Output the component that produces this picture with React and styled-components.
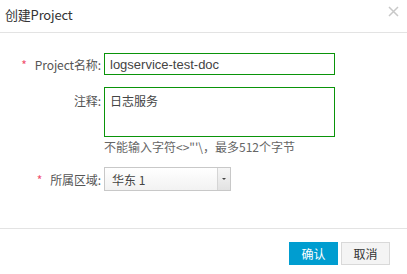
import styled, { createGlobalStyle } from "styled-components"

const Global = createGlobalStyle`
    html, body { margin: 0; padding: 0; background: #fff; }
    body { font-family: "Noto Sans CJK SC", "Liberation Sans", sans-serif; }
    * { box-sizing: border-box; }
`

export default function App() {
    return (
        <Dialog>
            <Global />
            <Header>
                <Title>创建Project</Title>
                <Close>
                    <svg width="11" height="11" viewBox="0 0 11 11">
                        <path d="M1 1L10 10M10 1L1 10" stroke="#c8c8c8" strokeWidth="1.5" />
                    </svg>
                </Close>
            </Header>
            <Body>
                <Row>
                    <Label><Star>*</Star>Project名称:</Label>
                    <Input value="logservice-test-doc" readOnly />
                </Row>
                <Row top>
                    <Label top>注释:</Label>
                    <Field>
                        <TextArea value="日志服务" readOnly />
                        <Hint>不能输入字符&lt;&gt;"'\，最多512个字节</Hint>
                    </Field>
                </Row>
                <Row>
                    <Label><Star>*</Star>所属区域:</Label>
                    <Select>
                        <span>华东 1</span>
                        <Arrow><i /></Arrow>
                    </Select>
                </Row>
            </Body>
            <Footer>
                <Button primary>确认</Button>
                <Button>取消</Button>
            </Footer>
        </Dialog>
    )
}

const Dialog = styled.div`
    width: 407px;
    height: 274px;
    background: #fff;
    display: flex;
    flex-direction: column;
`

const Header = styled.div`
    height: 33px;
    border-bottom: 1px solid #e3e3e3;
    display: flex;
    align-items: center;
    justify-content: space-between;
    padding: 0 8px 3px 5px;
`

const Title = styled.div`
    font-size: 13px;
    color: #333;
    letter-spacing: -0.2px;
`

const Close = styled.div`
    display: flex;
    margin-top: -6px;
`

const Body = styled.div`
    padding-top: 20px;
    height: 195px;
    display: flex;
    flex-direction: column;
    gap: 12px;
`

const Row = styled.div`
    display: flex;
    align-items: ${p => p.top ? "flex-start" : "center"};
`

const Label = styled.div`
    width: 104px;
    padding-right: 3px;
    padding-top: ${p => p.top ? 5 : 0}px;
    text-align: right;
    font-size: 12px;
    color: #555;
    letter-spacing: -0.1px;
`

const Star = styled.span`
    color: #f0506e;
    margin-right: 8px;
`

const Input = styled.input`
    width: 231px;
    height: 22px;
    border: 1px solid #0a940a;
    padding: 0 5px;
    font-family: "Liberation Sans", "Noto Sans CJK SC", sans-serif;
    font-size: 13px;
    color: #444;
    outline: none;
`

const Field = styled.div`
    display: flex;
    flex-direction: column;
`

const TextArea = styled.textarea`
    width: 231px;
    height: 50px;
    border: 1px solid #0a940a;
    padding: 5px 5px;
    font-family: "Noto Sans CJK SC", sans-serif;
    font-size: 12px;
    line-height: 16px;
    color: #444;
    resize: none;
    outline: none;
`

const Hint = styled.div`
    font-size: 12px;
    color: #666;
    margin-top: 2px;
    line-height: 16px;
`

const Select = styled.div`
    width: 127px;
    height: 24px;
    border: 1px solid #c8c8c8;
    background: linear-gradient(#fff, #f2f2f2);
    display: flex;
    align-items: center;
    justify-content: space-between;
    font-size: 12px;
    color: #444;
    span { padding-left: 7px; }
`

const Arrow = styled.div`
    width: 13px;
    height: 100%;
    border-left: 1px solid #d5d5d5;
    background: linear-gradient(#f6f6f6, #e2e2e2);
    display: flex;
    align-items: center;
    justify-content: center;
    i {
        width: 0;
        height: 0;
        border-left: 2px solid transparent;
        border-right: 2px solid transparent;
        border-top: 2px solid #444;
    }
`

const Footer = styled.div`
    border-top: 1px solid #e3e3e3;
    flex: 1;
    display: flex;
    justify-content: flex-end;
    align-items: flex-start;
    gap: 3px;
    padding: 13px 17px 0 0;
`

const Button = styled.div`
    width: 49px;
    height: 23px;
    display: flex;
    align-items: center;
    justify-content: center;
    font-size: 12px;
    background: ${p => p.primary ? "#009dd0" : "#f4f4f4"};
    color: ${p => p.primary ? "#fff" : "#333"};
    border: 1px solid ${p => p.primary ? "#009dd0" : "#d9d9d9"};
`
